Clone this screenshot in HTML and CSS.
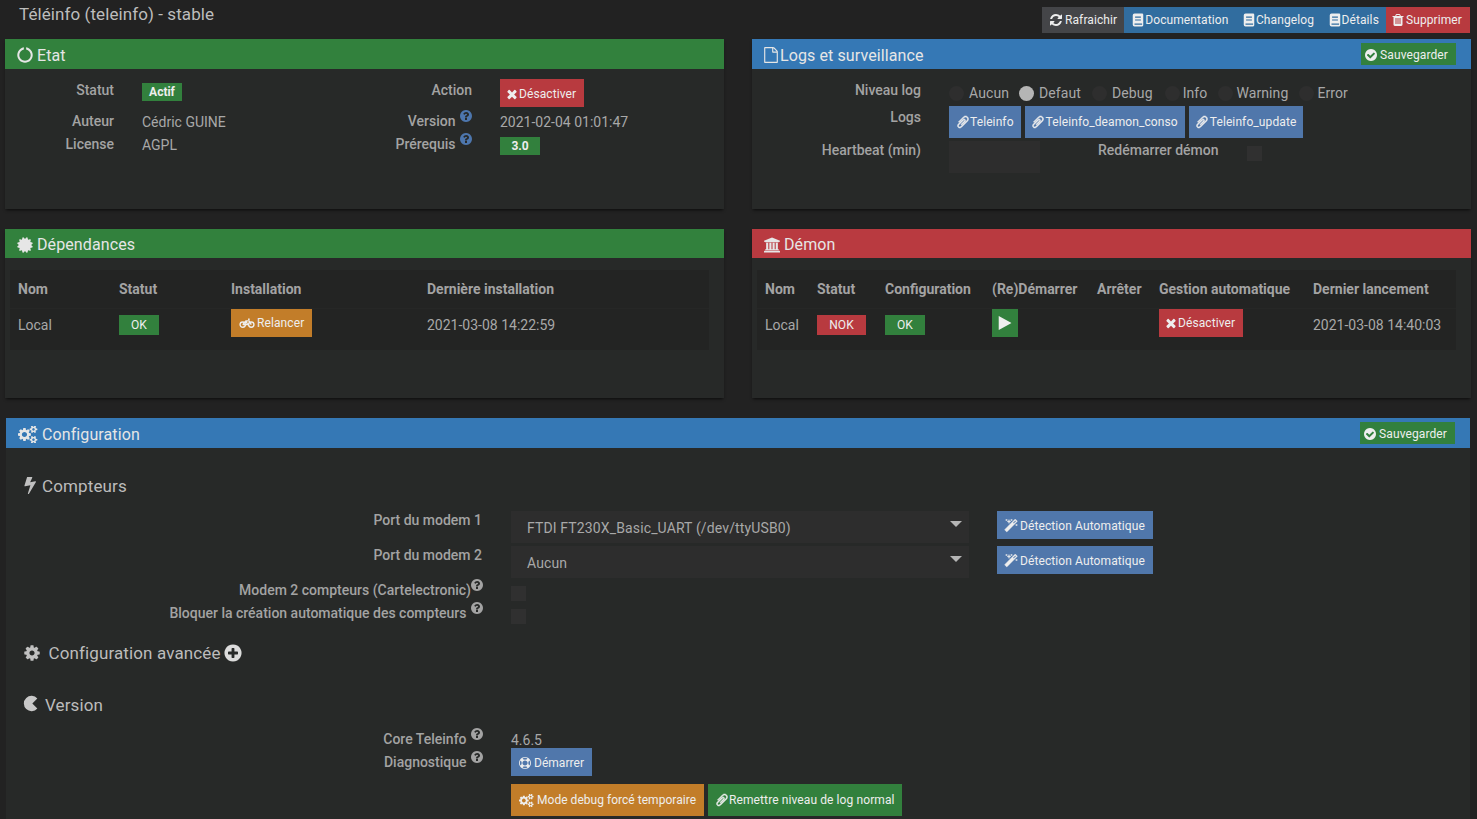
FILE: index.html
```html
<!DOCTYPE html>
<html lang="fr">
<head>
<meta charset="utf-8">
<title>Téléinfo</title>
<link rel="stylesheet" href="styles.css">
</head>
<body>
<svg class="sprite" aria-hidden="true">
  <symbol id="i-notch" viewBox="0 0 1792 1792"><path fill="currentColor" d="M1760 896q0 176-68.500 336t-184 275.500-275.500 184-336 68.500-336-68.500-275.500-184-184-275.500-68.500-336q0-213 97-398.500t265-305.500 374-151v228q-221 45-366.500 221t-145.500 406q0 130 51 248.500t136.500 204 204 136.500 248.500 51 248.500-51 204-136.500 136.500-204 51-248.500q0-230-145.500-406t-366.500-221v-228q206 31 374 151t265 305.500 97 398.500z"/></symbol>
  <symbol id="i-refresh" viewBox="0 0 1792 1792"><path fill="currentColor" d="M1639 1056q0 5-1 7-64 268-268 434.500t-478 166.500q-146 0-282.500-55t-243.500-157l-129 129q-19 19-45 19t-45-19-19-45v-448q0-26 19-45t45-19h448q26 0 45 19t19 45-19 45l-137 137q71 66 161 102t187 36q134 0 250-65t186-179q11-17 53-117 8-23 30-23h192q13 0 22.500 9.500t9.500 22.500zm25-800v448q0 26-19 45t-45 19h-448q-26 0-45-19t-19-45 19-45l138-138q-148-137-349-137-134 0-250 65t-186 179q-11 17-53 117-8 23-30 23h-199q-13 0-22.500-9.500t-9.500-22.500v-7q65-268 270-434.500t480-166.500q146 0 284 55.500t245 156.500l130-129q19-19 45-19t45 19 19 45z"/></symbol>
  <symbol id="i-book" viewBox="0 0 24 24"><path fill="currentColor" fill-rule="evenodd" d="M6 1h13a2 2 0 0 1 2 2v18a2 2 0 0 1-2 2H6a3 3 0 0 1-3-3V4a3 3 0 0 1 3-3zM7 6v2h10V6zM7 11v2h10v-2zM6 18v2h13v-2z"/></symbol>
  <symbol id="i-trash" viewBox="0 0 1792 1792"><path fill="currentColor" d="M704 1376v-704q0-14-9-23t-23-9h-64q-14 0-23 9t-9 23v704q0 14 9 23t23 9h64q14 0 23-9t9-23zm256 0v-704q0-14-9-23t-23-9h-64q-14 0-23 9t-9 23v704q0 14 9 23t23 9h64q14 0 23-9t9-23zm256 0v-704q0-14-9-23t-23-9h-64q-14 0-23 9t-9 23v704q0 14 9 23t23 9h64q14 0 23-9t9-23zm-544-992h448l-48-117q-7-9-17-11h-317q-10 2-17 11zm928 32v64q0 14-9 23t-23 9h-96v948q0 83-47 143.500t-113 60.500h-832q-66 0-113-58.500t-47-141.500v-952h-96q-14 0-23-9t-9-23v-64q0-14 9-23t23-9h309l70-167q15-37 54-63t79-26h320q40 0 79 26t54 63l70 167h309q14 0 23 9t9 23z"/></symbol>
  <symbol id="i-check" viewBox="0 0 1792 1792"><path fill="currentColor" d="M1412 734q0-28-18-46l-91-90q-19-19-45-19t-45 19l-408 407-226-226q-19-19-45-19t-45 19l-91 90q-18 18-18 46 0 27 18 45l362 362q19 19 45 19 27 0 46-19l543-543q18-18 18-45zm252 162q0 209-103 385.500t-279.500 279.500-385.500 103-385.500-103-279.500-279.500-103-385.500 103-385.500 279.500-279.500 385.500-103 385.500 103 279.500 279.500 103 385.500z"/></symbol>
  <symbol id="i-times" viewBox="0 0 1792 1792"><path fill="currentColor" d="M1490 1322q0 40-28 68l-136 136q-28 28-68 28t-68-28l-294-294-294 294q-28 28-68 28t-68-28l-136-136q-28-28-28-68t28-68l294-294-294-294q-28-28-28-68t28-68l136-136q28-28 68-28t68 28l294 294 294-294q28-28 68-28t68 28l136 136q28 28 28 68t-28 68l-294 294 294 294q28 28 28 68z"/></symbol>
  <symbol id="i-clip" viewBox="0 0 1792 1792"><path transform="translate(1792 0) scale(-1 1)" fill="currentColor" stroke="currentColor" stroke-width="70" d="M1596 1385q0 117-79 196t-196 79q-135 0-235-100l-777-776q-113-115-113-271 0-159 110-270t269-111q158 0 273 113l605 606q10 10 10 22 0 16-30.500 46.500t-46.500 30.500q-13 0-23-10l-606-607q-79-77-181-77-106 0-179 75t-73 181q0 105 76 181l776 777q63 63 145 63 64 0 106-42t42-106q0-82-63-145l-581-581q-26-24-60-24-29 0-48 19t-19 48q0 32 25 59l410 410q10 10 10 22 0 16-31 47t-47 31q-12 0-22-10l-410-410q-63-61-63-149 0-82 57-139t139-57q88 0 149 63l581 581q100 98 100 235z"/></symbol>
  <symbol id="i-file" viewBox="0 0 1792 1792"><path fill="currentColor" d="M1596 380q28 28 48 76t20 88v1152q0 40-28 68t-68 28h-1344q-40 0-68-28t-28-68v-1600q0-40 28-68t68-28h896q40 0 88 20t76 48zm-444-244v376h376q-10-29-22-41l-313-313q-12-12-41-22zm384 1528v-1024h-416q-40 0-68-28t-28-68v-416h-768v1536h1280z"/></symbol>
  <symbol id="i-cert" viewBox="0 0 1792 1792"><path fill="currentColor" d="M1504 896l138 135q30 28 20 70-12 41-52 51l-188 48 53 186q12 41-19 70-29 31-70 19l-186-53-48 188q-10 40-51 52-12 2-19 2-31 0-51-22l-135-138-135 138q-28 30-70 20-41-11-51-52l-48-188-186 53q-41 12-70-19-31-29-19-70l53-186-188-48q-40-10-52-51-10-42 20-70l138-135-138-135q-30-28-20-70 12-41 52-51l188-48-53-186q-12-41 19-70 29-31 70-19l186 53 48-188q10-41 51-51 41-12 70 19l135 139 135-139q29-30 70-19 41 10 51 51l48 188 186-53q41-12 70 19 31 29 19 70l-53 186 188 48q40 10 52 51 10 42-20 70z"/></symbol>
  <symbol id="i-bank" viewBox="0 0 1920 1792"><path fill="currentColor" d="M960 0l960 384v128h-128q0 26-20.500 45t-48.500 19h-1526q-28 0-48.500-19t-20.500-45h-128v-128zm-704 640h256v768h128v-768h256v768h128v-768h256v768h128v-768h256v768h59q28 0 48.500 19t20.500 45v64h-1664v-64q0-26 20.500-45t48.500-19h59v-768zm1595 960q28 0 48.500 19t20.500 45v128h-1920v-128q0-26 20.500-45t48.500-19h1782z"/></symbol>
  <symbol id="i-cog" viewBox="0 0 1792 1792"><path fill="currentColor" d="M1152 896q0-106-75-181t-181-75-181 75-75 181 75 181 181 75 181-75 75-181zm512-109v222q0 12-8 23t-20 13l-185 28q-19 54-39 91 35 50 107 138 10 12 10 25t-9 23q-27 37-99 108t-94 71q-12 0-26-9l-138-108q-44 23-91 38-16 136-29 186-7 28-36 28h-222q-14 0-24.500-8.500t-11.500-21.500l-28-184q-49-16-90-37l-141 107q-10 9-25 9-14 0-25-11-126-114-165-168-7-10-7-23 0-12 8-23 15-21 51-66.500t54-70.500q-27-50-41-99l-183-27q-13-2-21-12.500t-8-23.500v-222q0-12 8-23t19-13l186-28q14-46 39-92-40-57-107-138-10-12-10-24 0-10 9-23 26-36 98.500-107.500t94.500-71.500q13 0 26 10l138 107q44-23 91-38 16-136 29-186 7-28 36-28h222q14 0 24.500 8.500t11.500 21.500l28 184q49 16 90 37l142-107q9-9 24-9 13 0 25 10 129 119 165 170 7 8 7 22 0 12-8 23-15 21-51 66.500t-54 70.500q26 50 41 98l183 28q13 2 21 12.500t8 23.500z"/></symbol>
  <symbol id="i-cogs" viewBox="64 64 1984 1664"><path fill="currentColor" d="M960 896q0-106-75-181t-181-75-181 75-75 181 75 181 181 75 181-75 75-181zm768 512q0-52-38-90t-90-38-90 38-38 90q0 53 37.500 90.500t90.500 37.500 90.500-37.500 37.500-90.500zm0-1024q0-52-38-90t-90-38-90 38-38 90q0 53 37.500 90.500t90.500 37.500 90.500-37.500 37.500-90.500zm-384 421v185q0 10-7 19.500t-16 10.500l-155 24q-11 35-32 76 34 48 90 115 7 11 7 20 0 12-7 19-23 30-82.500 89.500t-78.500 59.500q-11 0-21-7l-115-90q-37 19-77 31-11 108-23 155-7 24-30 24h-186q-11 0-20-7.500t-10-17.500l-23-153q-34-10-75-31l-118 89q-7 7-20 7-11 0-21-8-144-133-144-160 0-9 7-19 10-14 41-53t47-61q-23-44-35-82l-152-24q-10-1-17-9.500t-7-19.500v-185q0-10 7-19.500t16-10.500l155-24q11-35 32-76-34-48-90-115-7-11-7-20 0-12 7-20 22-30 82-89t79-59q11 0 21 7l115 90q34-18 77-32 11-108 23-154 7-24 30-24h186q11 0 20 7.500t10 17.500l23 153q34 10 75 31l118-89q8-7 20-7 11 0 21 8 144 133 144 160 0 8-7 19-12 16-42 54t-45 60q23 48 34 82l152 23q10 2 17 10.500t7 19.500zm640 533v140q0 16-149 31-12 27-30 52 51 113 51 138 0 4-4 7-122 71-124 71-8 0-46-47t-52-68q-20 2-30 2t-30-2q-14 21-52 68t-46 47q-2 0-124-71-4-3-4-7 0-25 51-138-18-25-30-52-149-15-149-31v-140q0-16 149-31 13-29 30-52-51-113-51-138 0-4 4-7 4-2 35-20t59-34 30-16q8 0 46 46.500t52 67.500q20-2 30-2t30 2q51-71 92-112l6-2q4 0 124 70 4 3 4 7 0 25-51 138 17 23 30 52 149 15 149 31zm0-1024v140q0 16-149 31-12 27-30 52 51 113 51 138 0 4-4 7-122 71-124 71-8 0-46-47t-52-68q-20 2-30 2t-30-2q-14 21-52 68t-46 47q-2 0-124-71-4-3-4-7 0-25 51-138-18-25-30-52-149-15-149-31v-140q0-16 149-31 13-29 30-52-51-113-51-138 0-4 4-7 4-2 35-20t59-34 30-16q8 0 46 46.500t52 67.500q20-2 30-2t30 2q51-71 92-112l6-2q4 0 124 70 4 3 4 7 0 25-51 138 17 23 30 52 149 15 149 31z"/></symbol>
  <symbol id="i-bolt" viewBox="416 128 928 1664" preserveAspectRatio="none"><path fill="currentColor" d="M1333 566q18 20 7 44l-540 1157q-13 25-42 25-4 0-14-2-17-5-25.500-19t-4.500-30l197-808-406 101q-4 1-12 1-18 0-31-11-18-15-13-39l201-825q4-14 16-23t28-9h328q19 0 32 12.500t13 29.500q0 8-5 18l-171 463 396-98q8-2 12-2 19 0 34 15z"/></symbol>
  <symbol id="i-plus" viewBox="0 0 1792 1792"><path fill="currentColor" d="M1344 960v-128q0-26-19-45t-45-19h-256v-256q0-26-19-45t-45-19h-128q-26 0-45 19t-19 45v256h-256q-26 0-45 19t-19 45v128q0 26 19 45t45 19h256v256q0 26 19 45t45 19h128q26 0 45-19t19-45v-256h256q26 0 45-19t19-45zm320-64q0 209-103 385.500t-279.500 279.500-385.500 103-385.500-103-279.500-279.500-103-385.500 103-385.500 279.500-279.500 385.500-103 385.500 103 279.500 279.500 103 385.500z"/></symbol>
  <symbol id="i-pac" viewBox="0 0 24 24"><path fill="currentColor" d="M21.500 4.500A11.500 11.500 0 1 0 21.500 19.500L14 12z"/></symbol>
  <symbol id="i-magic" viewBox="0 0 1792 1792"><path fill="currentColor" stroke="currentColor" stroke-width="50" d="M1254 581l293-293-107-107-293 293zm447-293q0 27-18 45l-1286 1286q-18 18-45 18t-45-18l-198-198q-18-18-18-45t18-45l1286-1286q18-18 45-18t45 18l198 198q18 18 18 45zm-1351-190l98 30-98 30-30 98-30-98-98-30 98-30 30-98zm350 162l196 60-196 60-60 196-60-196-196-60 196-60 60-196zm930 478l98 30-98 30-30 98-30-98-98-30 98-30 30-98zm-640-640l98 30-98 30-30 98-30-98-98-30 98-30 30-98z"/></symbol>
  <symbol id="i-play" viewBox="0 0 1792 1792"><path fill="currentColor" d="M1576 927l-1328 738q-23 13-39.500 3t-16.500-36v-1472q0-26 16.500-36t39.500 3l1328 738q23 13 23 31t-23 31z"/></symbol>
  <symbol id="i-bike" viewBox="0 0 30 20"><g fill="none" stroke="currentColor" stroke-width="2.600"><circle cx="7" cy="13" r="5"/><circle cx="23" cy="13" r="5"/><path d="M7 13l6-7h6l4 7M13 6l3 7H7M17 3h3"/></g></symbol>
  <symbol id="i-help" viewBox="0 0 1792 1792"><path fill="currentColor" d="M1024 1376v-192q0-14-9-23t-23-9h-192q-14 0-23 9t-9 23v192q0 14 9 23t23 9h192q14 0 23-9t9-23zm256-672q0-88-55.500-163t-138.500-116-170-41q-243 0-371 213-15 24 8 42l132 100q7 6 19 6 16 0 25-12 53-68 86-92 34-24 86-24 48 0 85.500 26t37.500 59q0 38-20 61t-68 45q-63 28-115.500 86.500t-52.500 125.500v36q0 14 9 23t23 9h192q14 0 23-9t9-23q0-19 21.500-49.500t54.500-49.500q32-18 49-28.500t46-35 44.500-48 28-60.500 12.500-81zm384 192q0 209-103 385.500t-279.500 279.500-385.500 103-385.500-103-279.500-279.500-103-385.500 103-385.500 279.500-279.500 385.500-103 385.500 103 279.500 279.500 103 385.500z"/></symbol>
  <symbol id="i-ring" viewBox="0 0 1792 1792"><path fill="currentColor" d="M896 0q182 0 348 71t286 191 191 286 71 348-71 348-191 286-286 191-348 71-348-71-286-191-191-286-71-348 71-348 191-286 286-191 348-71zm0 128q-190 0-361 90l194 194q82-28 167-28t167 28l194-194q-171-90-361-90zm-678 1129l194-194q-28-82-28-167t28-167l-194-194q-90 171-90 361t90 361zm678 407q190 0 361-90l-194-194q-82 28-167 28t-167-28l-194 194q171 90 361 90zm0-384q159 0 271.500-112.500t112.500-271.500-112.500-271.500-271.500-112.500-271.500 112.500-112.500 271.500 112.500 271.500 271.500 112.500zm484-217l194 194q90-171 90-361t-90-361l-194 194q28 82 28 167t-28 167z"/></symbol>
</svg>

<header class="topbar">
  <h1 class="page-title">Téléinfo (teleinfo) - stable</h1>
  <nav class="top-actions">
    <a class="btn btn-top c-grey"><svg class="ic ic-refresh"><use href="#i-refresh"/></svg>Rafraichir</a>
    <a class="btn btn-top btn-top-first c-navy"><svg class="ic ic-book"><use href="#i-book"/></svg>Documentation</a>
    <a class="btn btn-top c-navy"><svg class="ic ic-book"><use href="#i-book"/></svg>Changelog</a>
    <a class="btn btn-top c-navy"><svg class="ic ic-book"><use href="#i-book"/></svg>Détails</a>
    <a class="btn btn-top btn-top-last c-red"><svg class="ic ic-trash"><use href="#i-trash"/></svg>Supprimer</a>
  </nav>
</header>

<main>
  <div class="panels">
    <section class="panel">
      <h2 class="panel-head h-green"><svg class="ic-h ic-notch"><use href="#i-notch"/></svg>Etat</h2>
      <div class="state-grid">
        <div class="lbl">Statut</div>
        <div><span class="badge badge-actif c-green">Actif</span></div>
        <div class="lbl">Action</div>
        <div><a class="btn btn-md c-red"><svg class="ic ic-times"><use href="#i-times"/></svg>Désactiver</a></div>
        <div class="lbl">Auteur</div>
        <div class="val">Cédric GUINE</div>
        <div class="lbl">Version <svg class="help help-blue"><use href="#i-help"/></svg></div>
        <div class="val">2021-02-04 01:01:47</div>
        <div class="lbl">License</div>
        <div class="val">AGPL</div>
        <div class="lbl">Prérequis <svg class="help help-blue"><use href="#i-help"/></svg></div>
        <div class="val-badge"><span class="badge badge-ver c-green">3.0</span></div>
      </div>
    </section>

    <section class="panel">
      <h2 class="panel-head h-blue"><svg class="ic-h ic-file"><use href="#i-file"/></svg>Logs et surveillance
        <a class="btn btn-save c-green"><svg class="ic ic-check"><use href="#i-check"/></svg>Sauvegarder</a></h2>
      <div class="logs-grid">
        <div class="lbl">Niveau log</div>
        <div class="radios">
          <span class="radio gap-a"><i class="dot"></i>Aucun</span>
          <span class="radio gap-b"><i class="dot dot-on"></i>Defaut</span>
          <span class="radio gap-c"><i class="dot"></i>Debug</span>
          <span class="radio gap-b"><i class="dot dot-i"></i>Info</span>
          <span class="radio gap-b"><i class="dot dot-i"></i>Warning</span>
          <span class="radio"><i class="dot dot-i"></i>Error</span>
        </div>
        <div class="lbl">Logs</div>
        <div class="log-btns">
          <a class="btn btn-lg c-steel"><svg class="ic ic-clip"><use href="#i-clip"/></svg>Teleinfo</a>
          <a class="btn btn-lg c-steel"><svg class="ic ic-clip"><use href="#i-clip"/></svg>Teleinfo_deamon_conso</a>
          <a class="btn btn-lg c-steel"><svg class="ic ic-clip"><use href="#i-clip"/></svg>Teleinfo_update</a>
        </div>
        <div class="lbl lbl-hb">Heartbeat (min)</div>
        <div class="hb-row">
          <span class="input-box"></span>
          <span class="lbl hb-lbl">Redémarrer démon</span>
          <span class="check"></span>
        </div>
      </div>
    </section>

    <section class="panel panel-b">
      <h2 class="panel-head panel-head-b h-green"><svg class="ic-h ic-cert"><use href="#i-cert"/></svg>Dépendances</h2>
      <table class="tbl tbl-dep">
        <colgroup><col class="d1"><col class="d2"><col class="d3"><col class="d4"></colgroup>
        <thead><tr><th>Nom</th><th>Statut</th><th>Installation</th><th>Dernière installation</th></tr></thead>
        <tbody><tr>
          <td>Local</td>
          <td><span class="badge badge-ok c-green">OK</span></td>
          <td class="top"><a class="btn btn-md c-orange"><svg class="ic ic-bike"><use href="#i-bike"/></svg>Relancer</a></td>
          <td>2021-03-08 14:22:59</td>
        </tr></tbody>
      </table>
    </section>

    <section class="panel panel-b">
      <h2 class="panel-head panel-head-b h-red"><svg class="ic-h ic-bank"><use href="#i-bank"/></svg>Démon</h2>
      <table class="tbl tbl-dem">
        <colgroup><col class="m1"><col class="m2"><col class="m3"><col class="m4"><col class="m5"><col class="m6"><col class="m7"></colgroup>
        <thead><tr><th>Nom</th><th>Statut</th><th>Configuration</th><th>(Re)Démarrer</th><th>Arrêter</th><th>Gestion automatique</th><th>Dernier lancement</th></tr></thead>
        <tbody><tr>
          <td>Local</td>
          <td><span class="badge badge-nok c-red">NOK</span></td>
          <td><span class="badge badge-ok c-green">OK</span></td>
          <td class="top"><a class="btn btn-play c-green"><svg class="ic-play"><use href="#i-play"/></svg></a></td>
          <td></td>
          <td class="top"><a class="btn btn-md c-red"><svg class="ic ic-times"><use href="#i-times"/></svg>Désactiver</a></td>
          <td>2021-03-08 14:40:03</td>
        </tr></tbody>
      </table>
    </section>
  </div>

  <section class="panel panel-config">
    <h2 class="panel-head h-blue"><svg class="ic-h ic-cogs"><use href="#i-cogs"/></svg>Configuration
      <a class="btn btn-save c-green"><svg class="ic ic-check"><use href="#i-check"/></svg>Sauvegarder</a></h2>

    <h3 class="legend leg-1"><svg class="ic-bolt"><use href="#i-bolt"/></svg>Compteurs</h3>
    <div class="form">
      <div class="lbl">Port du modem 1</div>
      <div class="ctl-row">
        <div class="select">FTDI FT230X_Basic_UART (/dev/ttyUSB0)</div>
        <a class="btn btn-md c-steel btn-detect"><svg class="ic ic-magic"><use href="#i-magic"/></svg>Détection Automatique</a>
      </div>
      <div class="lbl">Port du modem 2</div>
      <div class="ctl-row">
        <div class="select">Aucun</div>
        <a class="btn btn-md c-steel btn-detect"><svg class="ic ic-magic"><use href="#i-magic"/></svg>Détection Automatique</a>
      </div>
      <div class="lbl">Modem 2 compteurs (Cartelectronic)<svg class="help help-grey help-tight"><use href="#i-help"/></svg></div>
      <div class="ctl-check"><span class="check"></span></div>
      <div class="lbl">Bloquer la création automatique des compteurs <svg class="help help-grey"><use href="#i-help"/></svg></div>
      <div class="ctl-check"><span class="check"></span></div>
    </div>

    <h3 class="legend leg-2"><svg class="ic-cog"><use href="#i-cog"/></svg>Configuration avancée<svg class="ic-plus"><use href="#i-plus"/></svg></h3>

    <h3 class="legend leg-3"><svg class="ic-pac"><use href="#i-pac"/></svg>Version</h3>
    <div class="form form-ver">
      <div class="lbl">Core Teleinfo <svg class="help help-grey"><use href="#i-help"/></svg></div>
      <div class="ver-val">4.6.5</div>
      <div class="lbl">Diagnostique <svg class="help help-grey"><use href="#i-help"/></svg></div>
      <div class="diag">
        <a class="btn btn-md btn-tight c-steel"><svg class="ic ic-ring"><use href="#i-ring"/></svg>Démarrer</a>
        <div class="diag-btns">
          <a class="btn btn-lg btn-tight c-orange"><svg class="ic ic-gears"><use href="#i-cogs"/></svg>Mode debug forcé temporaire</a>
          <a class="btn btn-lg c-green"><svg class="ic ic-clip"><use href="#i-clip"/></svg>Remettre niveau de log normal</a>
        </div>
      </div>
    </div>
  </section>
</main>
</body>
</html>
```
FILE: styles.css
```css
* { box-sizing: border-box; }
html, body { height: 100%; }
body {
  margin: 0;
  overflow: hidden;
  background: #222;
  color: #a8a8a8;
  font: 400 14px/20px Roboto, "Liberation Sans", sans-serif;
}
.sprite { display: none; }

.topbar {
  display: flex;
  justify-content: space-between;
  align-items: flex-start;
  height: 39px;
  padding: 7px 7px 0 19px;
}
.page-title {
  margin: -3px 0 0;
  font-size: 17px;
  font-weight: 400;
  line-height: 20px;
  letter-spacing: .08px;
  color: #bdbdbd;
}
.top-actions { display: flex; }

.btn {
  display: inline-flex;
  align-items: center;
  color: #eee;
  font-size: 12px;
  line-height: 16px;
  letter-spacing: .1px;
  white-space: nowrap;
}
.btn-top { height: 26px; padding: 0 7px; }
.btn-top-first { padding-left: 7.500px; }
.btn-top-last { padding-right: 8px; }
.btn-md { height: 28px; padding: 1px 8px 0; vertical-align: top; }
.btn-lg { height: 32px; padding: 0 7px 0 8px; }
.btn-tight { letter-spacing: .03px; }
.btn-lg.btn-tight { padding-right: 8px; }
.btn-save {
  align-self: flex-start;
  height: 22px;
  margin: 1px 0 0 auto;
  padding: 1px 8px 0;
  flex: none;
}
.btn-play { width: 26px; height: 28px; justify-content: center; vertical-align: top; }
.btn-detect { width: 156px; margin-left: 28px; }

.c-grey { background: #444548; }
.c-navy { background: #316d9f; }
.c-red { background: #b83a3f; }
.c-green { background: #32803d; }
.c-steel { background: #5077ab; }
.c-orange { background: #c27d29; }

.ic { width: 14px; height: 14px; flex: none; }
.ic-refresh { margin-right: 2px; }
.ic-book { margin-left: -.5px; }
.ic-trash { margin: 0 1px 0 -2px; }
.ic-times { margin-left: -3px; }
.ic-check { margin: 0 2px 0 -5px; }
.ic-clip { margin: 0 .5px 0 -1.500px; }
.ic-magic { margin: 0 2px 0 -1px; }
.ic-ring { width: 12px; height: 12px; margin-right: 3px; }
.ic-bike { width: 16px; height: 12px; margin-right: 2px; }
.ic-gears { width: 15px; height: 13px; margin-right: 3px; }
.ic-play { width: 16px; height: 16px; color: #eee; }

.panels {
  display: grid;
  grid-template-columns: 719px 719px;
  column-gap: 28px;
  row-gap: 20px;
  padding-left: 5px;
}
.panel {
  height: 170px;
  background: #272928;
  box-shadow: 0 2px 3px -1px rgba(0, 0, 0, .7);
}
.panel-b { height: 169px; }
.panel-config {
  width: 1464px;
  height: 420px;
  margin: 20px 0 0 6px;
  box-shadow: none;
}
.panel-head {
  display: flex;
  align-items: center;
  height: 30px;
  margin: 0;
  padding: 3px 15px 0 12px;
  color: #e6e6e6;
  font-size: 16px;
  font-weight: 400;
  letter-spacing: .1px;
}
.panel-head-b { height: 29px; padding-top: 2px; }
.h-green { background: #32813d; }
.h-blue { background: #3578b5; }
.h-red { background: #b93a40; }
.ic-h { width: 16px; height: 16px; margin-right: 4px; flex: none; }
.ic-notch { margin-top: -1px; }
.ic-file { margin: -1px 1.500px 0 -1.500px; }
.ic-cert { width: 18px; height: 18px; margin: 0 3px 0 -1px; }
.ic-bank { margin: 0 4px 0 0; }
.ic-cogs { width: 20px; height: 17px; margin: -1px 4px 0 0; }

.lbl {
  text-align: right;
  font-weight: 500;
  color: #a3a3a3;
}
.help {
  display: inline-block;
  width: 14px;
  height: 14px;
  margin: -6px -1px -6px 0;
  vertical-align: 9.500px;
}
.form .help { margin-right: -2px; }
.form .help-tight { margin-left: -1px; }
.help-blue { color: #4d76ad; }
.help-grey { color: #a3a3a3; }

.state-grid {
  display: grid;
  grid-template-columns: 109px 193px 109px 1fr;
  grid-template-rows: 31px 23px 23px;
  column-gap: 28px;
  padding-top: 10px;
}
.state-grid .lbl { padding-top: 1px; }
.state-grid .val { padding-top: 2px; }
.val-badge { padding-top: 2px; }
.badge {
  display: inline-block;
  height: 18px;
  color: #eee;
  text-align: center;
  font-size: 12px;
  line-height: 18px;
}
.badge-actif, .badge-ver { width: 40px; font-weight: 700; }
.badge-actif { margin-top: 4px; }
.badge-ok { width: 40px; height: 20px; line-height: 20px; vertical-align: top; }
.badge-nok { width: 49px; height: 20px; line-height: 20px; vertical-align: top; }

.logs-grid {
  display: grid;
  grid-template-columns: 169px 1fr;
  grid-template-rows: 27px 35px 32px;
  column-gap: 28px;
  padding-top: 10px;
}
.logs-grid > .lbl { padding-top: 1px; }
.logs-grid > .lbl-hb { padding-top: 0; margin-top: -1px; }
.radios { display: flex; align-items: center; height: 28px; letter-spacing: .1px; }
.radio { display: inline-flex; align-items: center; }
.gap-a { margin-right: 10px; }
.gap-b { margin-right: 11px; }
.gap-c { margin-right: 12px; }
.dot {
  width: 15px;
  height: 15px;
  margin-right: 5px;
  border-radius: 50%;
  background: #2e2e2e;
}
.dot-i { margin-right: 3px; }
.dot-on { background: #b5b5b5; }
.log-btns { display: flex; gap: 4px; }
.hb-row { display: flex; align-items: flex-start; }
.input-box { width: 91px; height: 32px; background: #2d2d2d; }
.hb-lbl { margin: -1px 0 0 58px; }
.check { display: block; width: 15px; height: 15px; background: #303030; }
.hb-row .check { margin: 5px 0 0 29px; }

.tbl {
  border-collapse: collapse;
  table-layout: fixed;
  margin: 12px 0 0 5px;
  background: #232423;
}
.tbl-dep { width: 699px; }
.tbl-dem { width: 699px; }
.tbl th {
  height: 38px;
  padding: 1px 8px 0;
  text-align: left;
  font-weight: 700;
  color: #a3a3a3;
}
.tbl td { height: 42px; padding: 6px 8px 0; vertical-align: top; }
.tbl td.top { padding-top: 0; }
.tbl tbody tr { border-top: 1px solid #262726; }
.d1 { width: 101px; } .d2 { width: 112px; } .d3 { width: 196px; } .d4 { width: 290px; }
.m1 { width: 52px; } .m2 { width: 68px; } .m3 { width: 107px; } .m4 { width: 105px; }
.m5 { width: 62px; } .m6 { width: 154px; } .m7 { width: 151px; }

.legend {
  display: flex;
  align-items: center;
  margin: 0;
  padding-left: 18px;
  font-size: 17px;
  font-weight: 400;
  line-height: 24px;
  letter-spacing: .12px;
  color: #bcbcbc;
}
.leg-1 { margin-top: 26px; }
.leg-2 { margin-top: 14px; }
.leg-3 { margin-top: 28px; }
.ic-bolt { width: 12px; height: 17px; margin: -1px 6px 0 0; color: #c0c0c0; }
.ic-cog { width: 18px; height: 18px; margin: 0 7.500px 0 -1px; color: #c0c0c0; }
.ic-plus { width: 20px; height: 20px; margin-left: 2px; color: #dcdcdc; }
.ic-pac { width: 16px; height: 17px; margin: -3px 6px 0 -1px; color: #c8c8c8; }

.form {
  display: grid;
  grid-template-columns: 476px 1fr;
  grid-template-rows: 35px 35px 23px 23px;
  column-gap: 29px;
  margin-top: 13px;
}
.form .lbl { margin-top: -1px; }
.form-ver .lbl { margin-top: 0; }
.ctl-row { display: flex; align-items: flex-start; }
.select {
  position: relative;
  width: 458px;
  height: 32px;
  padding: 7px 16px 0;
  background: #2d2d2d;
  letter-spacing: .13px;
}
.select::after {
  content: "";
  position: absolute;
  top: 10px;
  right: 7px;
  border: 6px solid transparent;
  border-top: 6px solid #b5b5b5;
  border-bottom: 0;
}
.ctl-check { padding-top: 5px; }
.form-ver { grid-template-rows: 23px auto; margin-top: 12px; }
.ver-val { padding-top: 1px; }
.diag { margin-top: -4px; }
.diag-btns { display: flex; gap: 4px; margin-top: 8px; }
```
